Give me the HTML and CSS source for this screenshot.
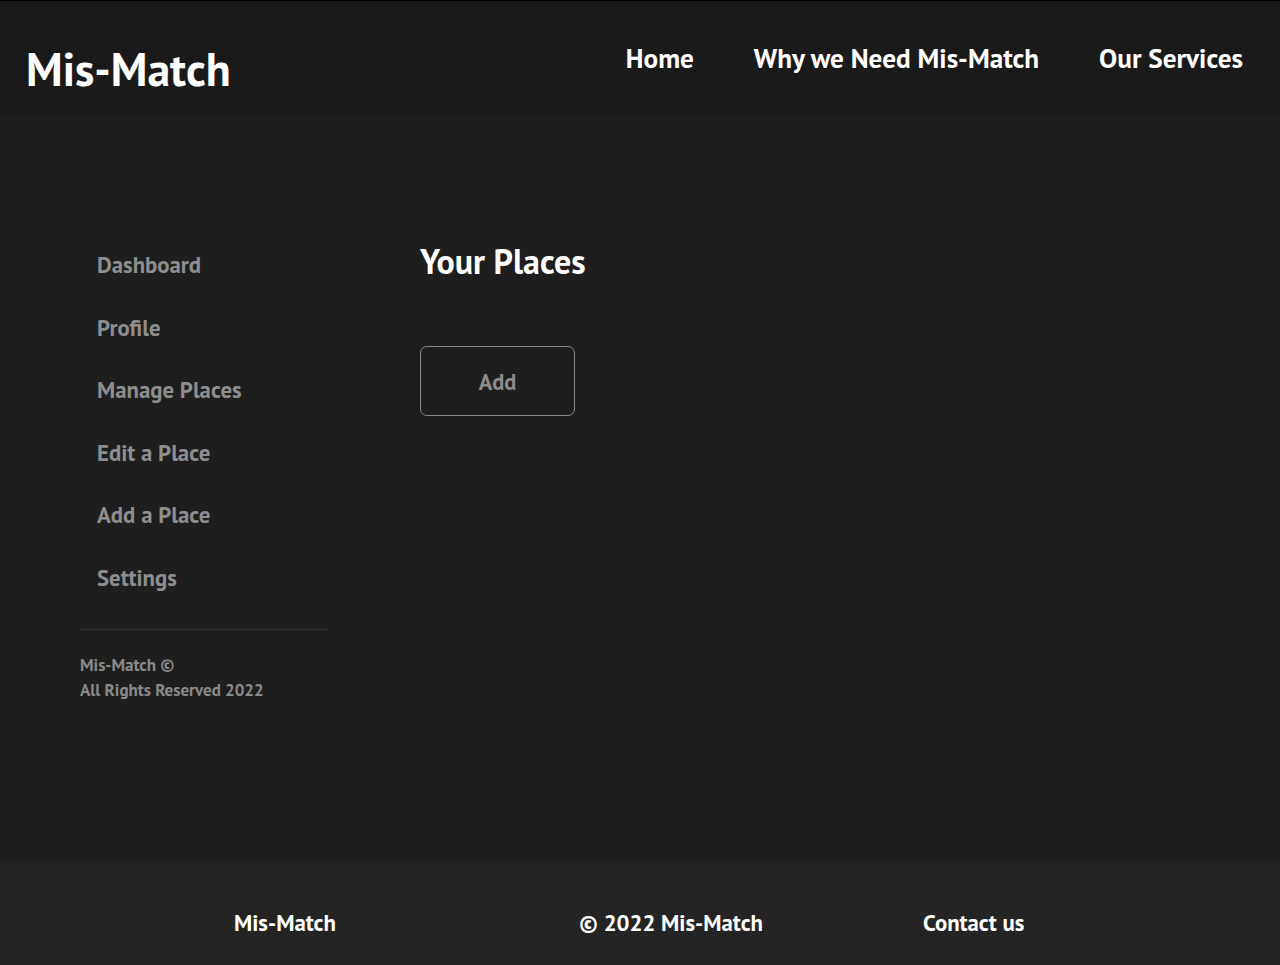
FILE: index.html
```html
<!DOCTYPE html>
<html lang="en">
<head>
<meta charset="utf-8">
<title>Mis-Match</title>
<link rel="stylesheet" href="styles.css">
</head>
<body>
<header class="site-header">
  <div class="logo">Mis-Match</div>
  <nav class="main-nav">
    <a href="#">Home</a>
    <a href="#">Why we Need Mis-Match</a>
    <a href="#">Our Services</a>
  </nav>
</header>
<main class="page">
  <aside class="sidebar">
    <ul class="side-menu">
      <li><a href="#">Dashboard</a></li>
      <li><a href="#">Profile</a></li>
      <li><a href="#">Manage Places</a></li>
      <li><a href="#">Edit a Place</a></li>
      <li><a href="#">Add a Place</a></li>
      <li><a href="#">Settings</a></li>
    </ul>
    <div class="side-foot">
      <p>Mis-Match ©</p>
      <p>All Rights Reserved 2022</p>
    </div>
  </aside>
  <section class="content">
    <h1 class="title">Your Places</h1>
    <button class="add-btn">Add</button>
  </section>
</main>
<footer class="site-footer">
  <span class="f1">Mis-Match</span>
  <span class="f2">© 2022 Mis-Match</span>
  <span class="f3">Contact us</span>
</footer>
</body>
</html>
```
FILE: styles.css
```css
* { box-sizing: border-box; }
html, body { margin: 0; padding: 0; }
body {
  background: #1e1e1e;
  font-family: "PT Sans", "Fira Sans", "Lato", sans-serif;
  font-weight: 700;
  color: #fff;
}
a { text-decoration: none; color: inherit; }

.site-header {
  height: 115px;
  background: #1b1a1a;
  border-top: 1px solid #000;
  display: flex;
  justify-content: space-between;
  align-items: flex-start;
  padding: 0 7px 0 26px;
}
.logo {
  font-size: 45.8px;
  line-height: 58px;
  margin-top: 39px;
  color: #fff;
}
.main-nav {
  display: flex;
  margin-top: 39px;
}
.main-nav a {
  font-size: 27.2px;
  line-height: 36px;
  padding: 0 30px;
  color: #fff;
}

.page {
  height: 748px;
  display: flex;
  padding: 0 0 0 80px;
}
.sidebar {
  width: 248px;
  padding-top: 119px;
}
.side-menu {
  list-style: none;
  margin: 0;
  padding: 0 0 19px 0;
  border-bottom: 1px solid #333;
}
.side-menu li a {
  display: block;
  padding: 17px 17px;
  font-size: 22.8px;
  line-height: 28.6px;
  color: #8e8e8e;
}
.side-foot {
  padding-top: 23px;
  color: #8a8a8a;
  font-size: 17px;
}
.side-foot p {
  margin: 0;
  line-height: 25px;
}
.content {
  margin-left: 92px;
  padding-top: 124px;
}
.title {
  margin: 0;
  font-size: 34px;
  line-height: 44px;
  color: #fff;
}
.add-btn {
  margin-top: 63px;
  width: 155px;
  height: 70px;
  background: transparent;
  border: 1.5px solid #8b8b8b;
  border-radius: 7px;
  font-family: inherit;
  font-weight: 700;
  font-size: 22.4px;
  color: #8c8c8c;
  padding: 0;
}

.site-footer {
  height: 102px;
  background: #242424;
  display: flex;
  align-items: center;
  padding: 16px 0 0 234px;
  font-size: 22.8px;
  color: #fff;
}
.f1 { margin-right: 243px; }
.f2 { margin-right: 160px; }
```
